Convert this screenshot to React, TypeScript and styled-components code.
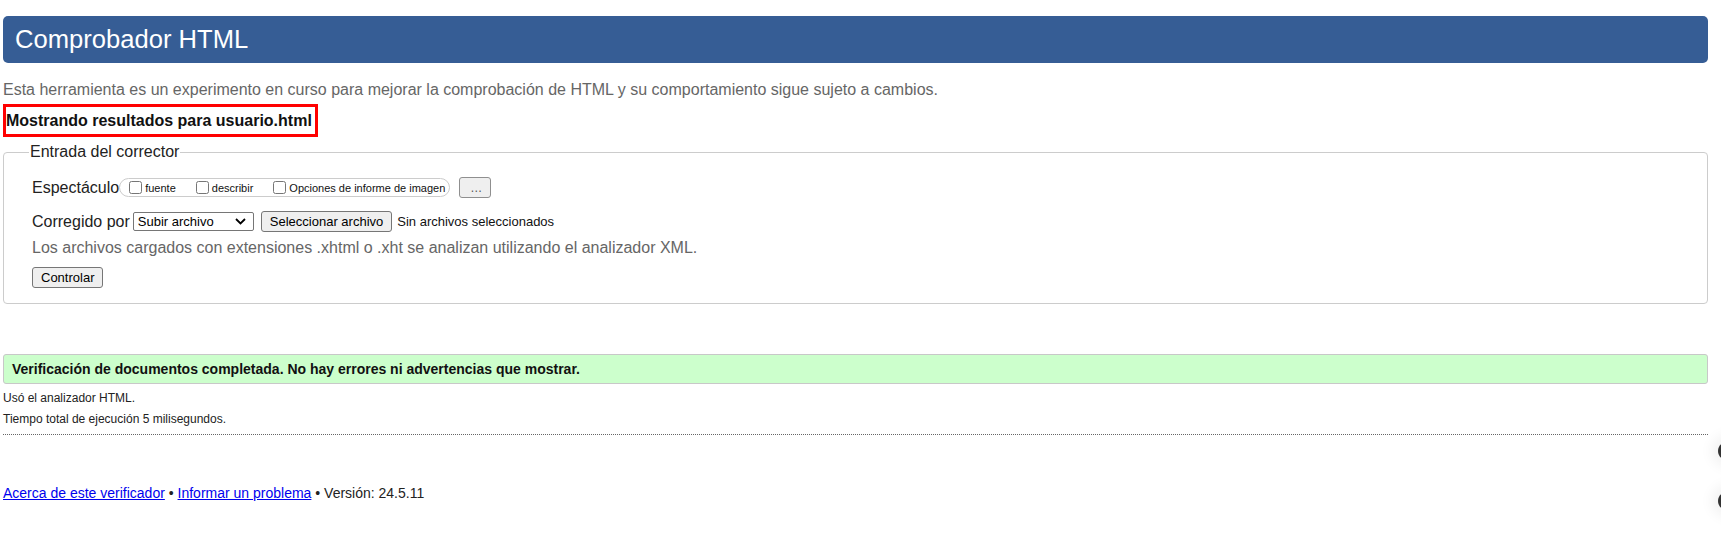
import React from "react";
import styled, { createGlobalStyle } from "styled-components";

const GlobalStyle = createGlobalStyle`
  html, body {
    margin: 0;
    padding: 0;
    background: #fff;
  }
  body {
    font-family: "Liberation Sans", Arial, sans-serif;
    color: #000;
    overflow: hidden;
  }
`;

const Page = styled.div`
  padding: 16px 13px 0 3px;
`;

const Title = styled.h1`
  margin: 0;
  padding: 9px 12px;
  background: #365d95;
  color: #fff;
  font-size: 25.6px;
  line-height: 29px;
  font-weight: normal;
  border-radius: 5px;
`;

const Intro = styled.p`
  margin: 18px 0 0;
  font-size: 16px;
  line-height: 18px;
  color: #666;
`;

const ResultsFor = styled.h2`
  width: fit-content;
  margin: 5px 0 0;
  padding: 4px 3px 4px 0;
  border: 3px solid #f00;
  font-size: 16px;
  line-height: 19px;
  font-weight: bold;
  color: #111;
`;

const Fieldset = styled.fieldset`
  margin: 6px 0 0;
  padding: 16px 12px 15px 28px;
  border: 1px solid #ccc;
  border-radius: 4px;
  min-width: 0;
`;

const Legend = styled.legend`
  margin-left: -3px;
  padding: 0 1px;
  font-size: 16px;
  line-height: 18px;
  color: #222;
`;

const Row = styled.div<{ $top?: number }>`
  display: flex;
  align-items: center;
  height: 21px;
  margin-top: ${(p) => p.$top ?? 0}px;
`;

const Label = styled.span`
  font-size: 16px;
  color: #222;
  white-space: nowrap;
`;

const Pill = styled.span`
  display: inline-flex;
  align-items: center;
  height: 17px;
  padding: 0 4px 0 5px;
  border: 1px solid #ccc;
  border-radius: 10px;
`;

const Option = styled.label<{ $last?: boolean }>`
  display: inline-flex;
  align-items: center;
  margin-right: ${(p) => (p.$last ? 0 : 16)}px;
  font-size: 11px;
  color: #111;
  white-space: nowrap;

  input {
    width: 13px;
    height: 13px;
    margin: 0 3px 0 4px;
  }
`;

const Button = styled.button<{ $wide?: boolean }>`
  height: 21px;
  margin: 0;
  padding: 0 ${(p) => (p.$wide ? 10 : 8)}px;
  background: #efefef;
  border: 1px solid #767676;
  border-radius: 3px;
  font-family: "Liberation Sans", Arial, sans-serif;
  font-size: 13px;
  color: #000;
`;

const MoreButton = styled(Button)`
  margin-left: 9px;
  width: 32px;
  color: #555;
  font-size: 12px;
  border-color: #8f8f8f;
`;

const SelectWrap = styled.span`
  position: relative;
  display: inline-flex;
  margin: 0 7px 0 3px;

  svg {
    position: absolute;
    right: 8px;
    top: 6px;
    pointer-events: none;
  }
`;

const Select = styled.select`
  appearance: none;
  width: 121px;
  height: 19px;
  margin: 0;
  padding: 0 0 0 4px;
  background: #fff;
  border: 1px solid #767676;
  border-radius: 2px;
  font-family: "Liberation Sans", Arial, sans-serif;
  font-size: 13px;
  color: #000;
`;

const FileState = styled.span`
  margin-left: 5px;
  font-size: 13px;
  color: #111;
`;

const Hint = styled.p`
  margin: 7px 0 0;
  font-size: 16px;
  line-height: 18px;
  color: #666;
`;

const Success = styled.p`
  margin: 50px 0 0;
  padding: 6px 8px;
  background: #ccffcc;
  border: 1px solid #c8c8c8;
  border-radius: 3px;
  font-size: 14px;
  line-height: 16px;
  font-weight: bold;
  color: #111;
`;

const Details = styled.div`
  margin-top: 4px;
  font-size: 12px;
  line-height: 21px;
  color: #222;
  padding-bottom: 4px;
  border-bottom: 1px dotted #666;
`;

const Footer = styled.p`
  margin: 50px 0 0;
  font-size: 14px;
  line-height: 16px;
  color: #222;

  a {
    color: #0000ee;
  }
`;

const Floaters = styled.div`
  position: fixed;
  right: -19px;
  top: 441px;
  display: flex;
  flex-direction: column;
  gap: 30px;
`;

const Dot = styled.span`
  display: block;
  width: 22px;
  height: 20px;
  border-radius: 50%;
  background: #333;
  box-shadow: 0 0 14px 6px rgba(0, 0, 0, 0.06);
`;

export default function App() {
  return (
    <>
      <GlobalStyle />
      <Page>
        <Title>Comprobador HTML</Title>
        <Intro>
          Esta herramienta es un experimento en curso para mejorar la comprobación de HTML y su
          comportamiento sigue sujeto a cambios.
        </Intro>
        <ResultsFor>Mostrando resultados para usuario.html</ResultsFor>

        <Fieldset>
          <Legend>Entrada del corrector</Legend>
          <Row>
            <Label>Espectáculo</Label>
            <Pill>
              <Option>
                <input type="checkbox" />
                fuente
              </Option>
              <Option>
                <input type="checkbox" />
                describir
              </Option>
              <Option $last>
                <input type="checkbox" />
                Opciones de informe de imagen
              </Option>
            </Pill>
            <MoreButton $wide>…</MoreButton>
          </Row>
          <Row $top={13}>
            <Label>Corregido por</Label>
            <SelectWrap>
              <Select defaultValue="file">
                <option value="file">Subir archivo</option>
                <option value="url">Dirección</option>
                <option value="text">Entrada de texto</option>
              </Select>
              <svg width="11" height="7" viewBox="0 0 11 7">
                <path d="M1 1l4.5 4.5L10 1" fill="none" stroke="#000" strokeWidth="1.8" />
              </svg>
            </SelectWrap>
            <Button>Seleccionar archivo</Button>
            <FileState>Sin archivos seleccionados</FileState>
          </Row>
          <Hint>
            Los archivos cargados con extensiones .xhtml o .xht se analizan utilizando el analizador
            XML.
          </Hint>
          <Row $top={10}>
            <Button>Controlar</Button>
          </Row>
        </Fieldset>

        <Success>
          Verificación de documentos completada. No hay errores ni advertencias que mostrar.
        </Success>
        <Details>
          <div>Usó el analizador HTML.</div>
          <div>Tiempo total de ejecución 5 milisegundos.</div>
        </Details>

        <Footer>
          <a href="#about">Acerca de este verificador</a> •{" "}
          <a href="#issues">Informar un problema</a> • Versión: 24.5.11
        </Footer>
      </Page>
      <Floaters>
        <Dot />
        <Dot />
      </Floaters>
    </>
  );
}
